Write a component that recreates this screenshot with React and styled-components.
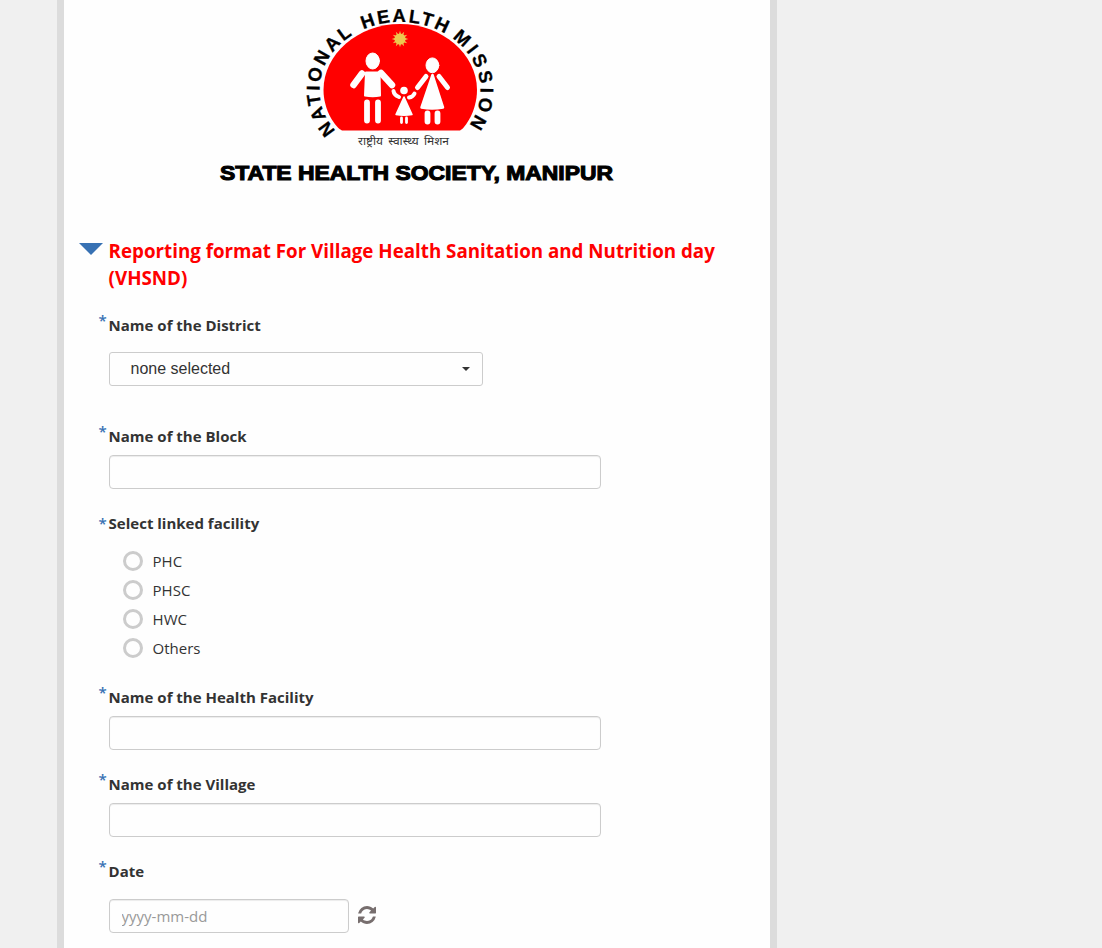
import React from "react";
import styled, { createGlobalStyle } from "styled-components";

const Global = createGlobalStyle`
  *, *::before, *::after { box-sizing: border-box; }
  body { margin: 0; background: #f0f0f0; overflow: hidden; }
`;

const Page = styled.div`
  height: 948px;
  padding-left: 57px;
  overflow: hidden;
  font: 400 15px/21px "Open Sans", sans-serif;
  color: #333;
`;

const Paper = styled.main`
  width: 720px;
  height: 100%;
  border: solid #dcdcdc;
  border-width: 0 7px;
  background: #fefefe;
`;

const Header = styled.header`
  height: 237px;
  padding-left: 146px;
`;

const Logo = styled.svg`
  display: block;
`;

const Form = styled.form`
  padding-left: 45px;
`;

const GroupHeading = styled.div`
  display: flex;
  margin-left: -30px;
  width: 665px;
`;

const Collapse = styled.span`
  width: 24px;
  height: 12px;
  margin: 6px 5.6px 0 0;
  background: #3771b3;
  clip-path: polygon(0 0, 100% 0, 50% 100%);
`;

const Title = styled.h4`
  margin: 0;
  flex: 1;
  font-size: 18.75px;
  line-height: 27px;
  font-weight: 700;
  color: #f00;
`;

const Field = styled.section`
  margin-top: ${(p) => p.$gap}px;
`;

const Label = styled.div`
  display: flex;
  align-items: flex-start;
  height: 21px;
  margin: 0 0 ${(p) => p.$space ?? 8}px -10.4px;
  font-weight: 700;
  white-space: nowrap;

  &::before {
    content: "*";
    width: 10px;
    margin-top: ${(p) => (p.$level ? 0 : -5)}px;
    color: #3771b3;
    font-weight: 600;
  }
`;

const Input = styled.input`
  display: block;
  width: ${(p) => p.$width ?? 492}px;
  height: 34px;
  padding: 6px 11.5px;
  border: 1px solid #ccc;
  border-radius: 4px;
  background: #fefefe;
  box-shadow: inset 0 1px 1px rgba(0, 0, 0, 0.075);
  font: 400 15px/20px "Open Sans", sans-serif;
  color: #333;

  &::placeholder { color: #999; opacity: 1; }
`;

const Select = styled.button`
  display: flex;
  align-items: center;
  justify-content: space-between;
  width: 374px;
  height: 34px;
  padding: 0 12px 0 20.5px;
  border: 1px solid #ccc;
  border-radius: 3px;
  background: #fefefe;
  font: 16px "Liberation Sans", Arial, sans-serif;
  color: #333;
`;

const Caret = styled.span`
  border: 4px solid transparent;
  border-top-color: #333;
  border-bottom: 0;
`;

const Options = styled.div`
  display: grid;
  grid-auto-rows: 29px;
  padding-left: 14px;
`;

const Option = styled.label`
  display: flex;
  align-items: center;
  gap: 9.6px;
`;

const Radio = styled.input`
  appearance: none;
  width: 20px;
  height: 20px;
  margin: 0;
  border: 3px solid #ccc;
  border-radius: 50%;
`;

const OptionText = styled.span`
  padding-top: 2px;
`;

const DateRow = styled.div`
  display: flex;
  align-items: center;
  gap: 9px;
`;

const Reset = styled.svg`
  width: 18px;
  height: 18px;
  margin-top: -3px;
  fill: #776e6e;
`;

const sunRays = Array.from({ length: 24 }, (_, i) => {
  const r = i % 2 ? 4.5 : 8.3;
  const a = (i * Math.PI) / 12;
  return `${190 + r * Math.cos(a)},${39 + r * Math.sin(a)}`;
}).join(" ");

const arcWords = [
  { word: "NATIONAL", start: 0, length: 112 },
  { word: "HEALTH", start: 124, length: 85 },
  { word: "MISSION", start: 217, length: 99 },
];

function SocietyLogo() {
  return (
    <Logo width="410" height="195" viewBox="0 0 410 195">
      <defs>
        <path id="arc" d="M125.7 130.9 A80.5 68 0 0 1 190 22 A80.5 68 0 0 1 245 139.7" />
      </defs>
      <path
        fill="#f00"
        d="M132 130.5 C126 128 113.5 111 113.5 90 C113.5 54 148 24 190 24 C232 24 267 54 267 90 C267 111 255 128 250 130.5Z"
      />
      {arcWords.map(({ word, start, length }) => (
        <text
          key={word}
          fontFamily="Liberation Sans"
          fontWeight="700"
          fontSize="18.5"
          fill="#000"
          stroke="#000"
          strokeWidth="0.3"
        >
          <textPath href="#arc" startOffset={start} textLength={length} lengthAdjust="spacing">
            {word}
          </textPath>
        </text>
      ))}
      <polygon points={sunRays} fill="#edc850" />
      <circle cx="190" cy="39" r="5.5" fill="#edc850" />
      <g fill="#fefefe" stroke="#fefefe" strokeLinecap="round" strokeLinejoin="round">
        <ellipse cx="162.7" cy="61" rx="6.7" ry="8" />
        <path d="M156 72.5H169.5L170 95.5Q163 97 155 95.5Z" strokeWidth="2" />
        <path d="M152 73.5 143.500 85M171 73 182 85" strokeWidth="6.5" />
        <path d="M157 102.5V120.5M168 102.5V120.5" strokeWidth="5.8" />
        <ellipse cx="222.4" cy="65.3" rx="6.4" ry="7.4" />
        <path d="M222.5 75 233 107.5Q222 109.500 211.5 107.5Z" strokeWidth="2.5" />
        <path d="M216 76.5 207.5 87.5M229 76.5 237.5 87.5" strokeWidth="5" />
        <path d="M217.5 113.5V121.5M227.5 113.5V121.5" strokeWidth="5.8" />
        <circle cx="194" cy="90.5" r="3.8" stroke="none" />
        <path d="M194 97 202 114.5Q194 116 186 114.5Z" strokeWidth="1.5" />
        <path d="M183.5 91Q184 95 189 97M204.5 93.5Q203 97 199 97.5" fill="none" strokeWidth="4" />
        <path d="M191.5 118V122.5M196.5 118V122.5" strokeWidth="2.8" />
      </g>
      <text
        x="148"
        y="145"
        fontFamily="Noto Sans, sans-serif"
        fontSize="11.5"
        fill="#333"
        wordSpacing="2"
        textLength="91"
        lengthAdjust="spacingAndGlyphs"
      >
        राष्ट्रीय स्वास्थ्य मिशन
      </text>
      <text
        x="10"
        y="179.8"
        fontFamily="Liberation Sans"
        fontWeight="700"
        fontSize="20.5"
        fill="#000"
        stroke="#000"
        strokeWidth="1.1"
        textLength="393"
        lengthAdjust="spacingAndGlyphs"
      >
        STATE HEALTH SOCIETY, MANIPUR
      </text>
    </Logo>
  );
}

export default function App() {
  return (
    <Page>
      <Global />
      <Paper>
        <Header>
          <SocietyLogo />
        </Header>
        <Form>
          <GroupHeading>
            <Collapse />
            <Title>Reporting format For Village Health Sanitation and Nutrition day (VHSND)</Title>
          </GroupHeading>
          <Field $gap={24}>
            <Label $space={16}>Name of the District</Label>
            <Select type="button">
              none selected
              <Caret />
            </Select>
          </Field>
          <Field $gap={40}>
            <Label>Name of the Block</Label>
            <Input />
          </Field>
          <Field $gap={24}>
            <Label $level $space={12}>Select linked facility</Label>
            <Options>
              {["PHC", "PHSC", "HWC", "Others"].map((name) => (
                <Option key={name}>
                  <Radio type="radio" name="facility" />
                  <OptionText>{name}</OptionText>
                </Option>
              ))}
            </Options>
          </Field>
          <Field $gap={25}>
            <Label>Name of the Health Facility</Label>
            <Input />
          </Field>
          <Field $gap={24}>
            <Label>Name of the Village</Label>
            <Input />
          </Field>
          <Field $gap={24}>
            <Label $space={17}>Date</Label>
            <DateRow>
              <Input $width={240} placeholder="yyyy-mm-dd" />
              <Reset viewBox="0 0 1536 1536">
                <path d="M1511 928q0 5-1 7-64 268-268 434.500T764 1536q-146 0-282.500-55T238 1324l-129 129q-19 19-45 19t-45-19-19-45V960q0-26 19-45t45-19h448q26 0 45 19t19 45-19 45l-137 137q71 66 161 102t187 36q134 0 250-65t186-179q11-17 53-117 8-23 30-23h192q13 0 22.500 9.500t9.500 22.500zm25-800v448q0 26-19 45t-45 19h-448q-26 0-45-19t-19-45 19-45l138-138Q969 256 768 256q-134 0-250 65T332 500q-11 17-53 117-8 23-30 23H50q-13 0-22.500-9.500T18 608v-7q65-268 270-434.500T768 0q146 0 284 55.500T1297 212l130-129q19-19 45-19t45 19 19 45z" />
              </Reset>
            </DateRow>
          </Field>
        </Form>
      </Paper>
    </Page>
  );
}
